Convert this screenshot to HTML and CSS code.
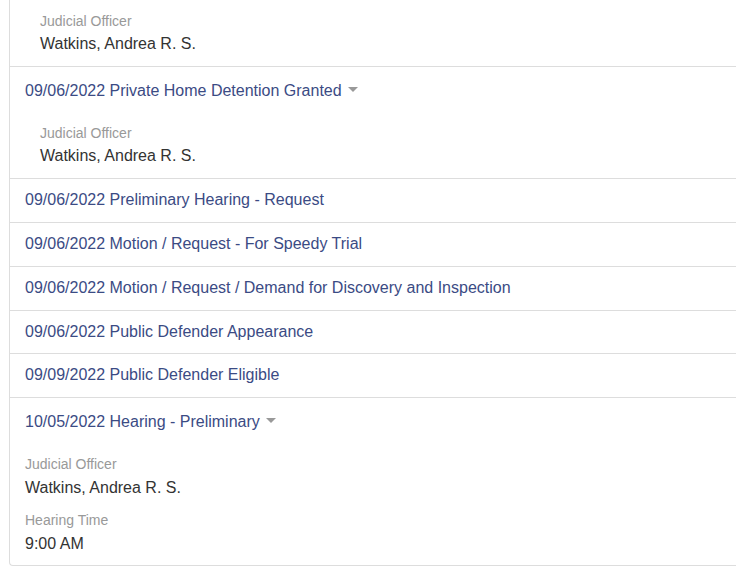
FILE: index.html
```html
<!DOCTYPE html>
<html>
<head>
<meta charset="utf-8">
<link rel="stylesheet" href="styles.css">
</head>
<body>
<ul class="events">
  <li class="event event--cut">
    <dl class="details details--indent">
      <dt>Judicial Officer</dt>
      <dd>Watkins, Andrea R. S.</dd>
    </dl>
  </li>
  <li class="event event--second">
    <div class="event-title">09/06/2022 Private Home Detention Granted <span class="caret"></span></div>
    <dl class="details details--indent">
      <dt>Judicial Officer</dt>
      <dd>Watkins, Andrea R. S.</dd>
    </dl>
  </li>
  <li class="event event--plain"><div class="event-title">09/06/2022 Preliminary Hearing - Request</div></li>
  <li class="event event--plain"><div class="event-title">09/06/2022 Motion / Request - For Speedy Trial</div></li>
  <li class="event event--plain"><div class="event-title">09/06/2022 Motion / Request / Demand for Discovery and Inspection</div></li>
  <li class="event event--plain event--short"><div class="event-title">09/06/2022 Public Defender Appearance</div></li>
  <li class="event event--plain"><div class="event-title">09/09/2022 Public Defender Eligible</div></li>
  <li class="event event--last">
    <div class="event-title">10/05/2022 Hearing - Preliminary <span class="caret"></span></div>
    <dl class="details">
      <dt>Judicial Officer</dt>
      <dd>Watkins, Andrea R. S.</dd>
      <dt>Hearing Time</dt>
      <dd>9:00 AM</dd>
    </dl>
  </li>
</ul>
</body>
</html>
```
FILE: styles.css
```css
html, body {
  margin: 0;
  padding: 0;
  background: #fff;
  overflow: hidden;
}
body {
  font-family: "Liberation Sans", Arial, sans-serif;
  color: #333;
}
.events {
  list-style: none;
  margin: 0 -20px 0 9px;
  padding: 0;
  border-left: 1px solid #dddddd;
  border-bottom: 1px solid #dddddd;
  border-bottom-left-radius: 4px;
}
.event {
  border-top: 1px solid #dddddd;
  padding: 11px 15px 12px;
}
.event--cut {
  border-top: none;
  padding-top: 11px;
}
.event--second {
  padding-top: 12px;
}
.event--second .details {
  margin-bottom: 0;
}
.event--plain {
  padding: 10px 15px 12px;
}
.event--short {
  padding-bottom: 11px;
}
.event--plain .event-title {
  line-height: 21px;
}
.event-title {
  font-size: 16px;
  line-height: 24px;
  color: #3b4b84;
}
.caret {
  display: inline-block;
  width: 0;
  height: 0;
  margin-left: 2px;
  vertical-align: middle;
  border-top: 5px solid #999;
  border-left: 5px solid transparent;
  border-right: 5px solid transparent;
  position: relative;
  top: -2px;
}
.details {
  margin: 20px 0 1px;
}
.event--cut .details {
  margin-top: 0;
  margin-bottom: 0;
}
.event--last {
  padding-top: 12px;
  padding-bottom: 11px;
}
.event--last .details {
  margin-top: 20px;
  margin-bottom: 0;
}
.event--last .details dd {
  margin-top: 4px;
}
.event--last .details dd + dt {
  margin-top: 12px;
}
.details--indent {
  padding-left: 15px;
}
.details dt {
  font-size: 14px;
  line-height: 20px;
  color: #999;
}
.details dd {
  margin: 3px 0 0;
  font-size: 16px;
  line-height: 20px;
  color: #333;
}
.details dd + dt {
  margin-top: 13px;
}
```
